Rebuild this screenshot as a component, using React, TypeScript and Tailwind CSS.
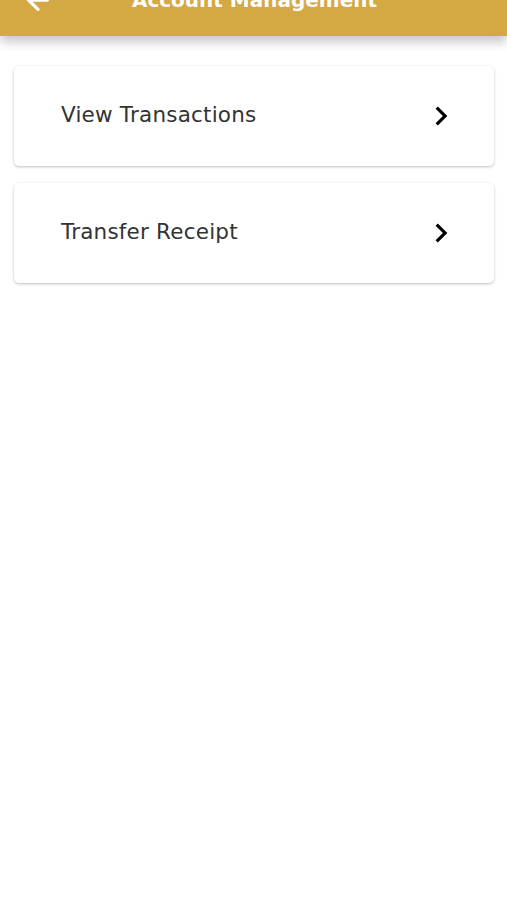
import { ArrowLeft } from 'lucide-react';
import { MdChevronRight } from 'react-icons/md';

const items = ['View Transactions', 'Transfer Receipt'];

export default function App() {
  return (
    <div className="min-h-[900px] bg-white overflow-hidden" style={{ fontFamily: '"DejaVu Sans", "Noto Sans", sans-serif' }}>
      {/* header, scrolled partly out of view */}
      <div className="relative z-10 -mt-[36px] h-[72px] bg-[#d4a843] flex items-center pl-[22px] pr-5 shadow-[0_6px_10px_rgba(0,0,0,0.22)]">
        <ArrowLeft size={32} strokeWidth={2.5} className="text-white" />
        <h1 className="flex-1 text-center text-white font-bold text-[20px] pr-[32px]">
          Account Management
        </h1>
      </div>

      <div className="flex flex-col gap-[17px] pt-[30px] pl-[14px] pr-[13px]">
        {items.map((label) => (
          <button
            key={label}
            className="h-[100px] w-full bg-white rounded-[5px] flex items-center justify-between pl-[47px] pr-[34px] shadow-[0_1px_3px_rgba(0,0,0,0.25)]"
          >
            <span className="text-[21.5px] text-[#333333] leading-none -mt-[3px] tracking-[0.2px]">{label}</span>
            <MdChevronRight size={38} className="text-black" />
          </button>
        ))}
      </div>
    </div>
  );
}
